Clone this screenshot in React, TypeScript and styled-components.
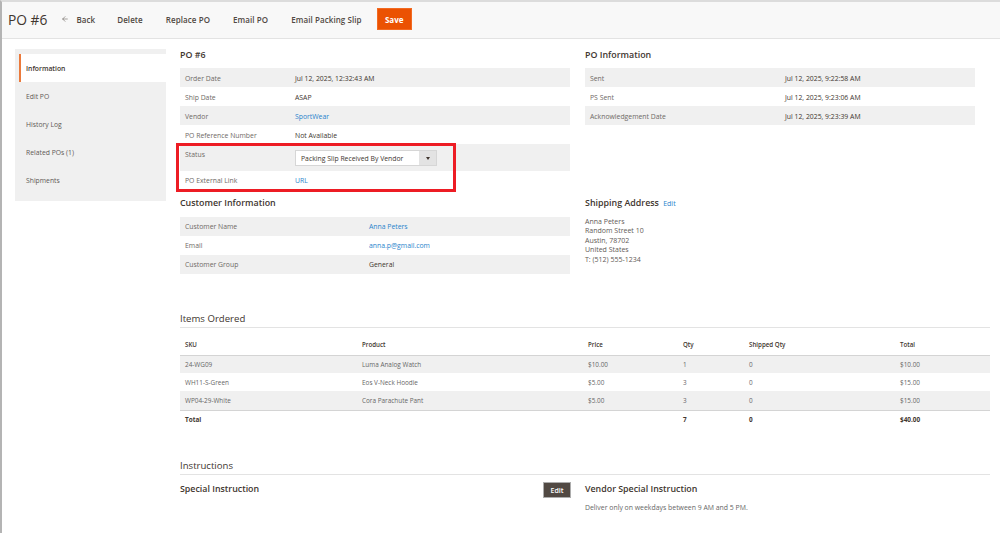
import styled, { createGlobalStyle } from 'styled-components';
import { ArrowLeft } from 'lucide-react';

const GlobalStyle = createGlobalStyle`
  html, body {
    margin: 0;
    padding: 0;
    background: #fff;
  }

  * {
    box-sizing: border-box;
  }
`

type InfoRowData = {
  label: string;
  value: string;
  link?: boolean;
}

const orderRows: InfoRowData[] = [
  { label: 'Order Date', value: 'Jul 12, 2025, 12:32:43 AM' },
  { label: 'Ship Date', value: 'ASAP' },
  { label: 'Vendor', value: 'SportWear', link: true },
  { label: 'PO Reference Number', value: 'Not Available' },
];

const infoRows: InfoRowData[] = [
  { label: 'Sent', value: 'Jul 12, 2025, 9:22:58 AM' },
  { label: 'PS Sent', value: 'Jul 12, 2025, 9:23:06 AM' },
  { label: 'Acknowledgement Date', value: 'Jul 12, 2025, 9:23:39 AM' },
];

const customerRows: InfoRowData[] = [
  { label: 'Customer Name', value: 'Anna Peters', link: true },
  { label: 'Email', value: 'anna.p@gmail.com', link: true },
  { label: 'Customer Group', value: 'General' },
];

const items = [
  ['24-WG09', 'Luma Analog Watch', '$10.00', '1', '0', '$10.00'],
  ['WH11-S-Green', 'Eos V-Neck Hoodie', '$5.00', '3', '0', '$15.00'],
  ['WP04-29-White', 'Cora Parachute Pant', '$5.00', '3', '0', '$15.00'],
];

const navItems = ['Information', 'Edit PO', 'History Log', 'Related POs (1)', 'Shipments'];
const columns = [177, 226, 95, 66, 151, 95];
const headers = ['SKU', 'Product', 'Price', 'Qty', 'Shipped Qty', 'Total'];

type InfoRowsProps = {
  rows: InfoRowData[];
  labelWidth: number;
  offset?: number;
}

const InfoRows = ({ rows, labelWidth, offset = 1 }: InfoRowsProps) => (
  <>
    {rows.map((row, i) => (
      <InfoRow key={row.label} $labelWidth={labelWidth} $shaded={i % 2 === 0} $offset={offset}>
        <Label>{row.label}</Label>
        {row.link ? <LinkValue>{row.value}</LinkValue> : <Value>{row.value}</Value>}
      </InfoRow>
    ))}
  </>
);

export default function App() {
  return (
    <Page>
      <GlobalStyle />
      <Toolbar>
        <PageTitle>PO #6</PageTitle>
        <BackAction>
          <ArrowLeft size={8} strokeWidth={1.5} />
          Back
        </BackAction>
        <Action $left={22}>Delete</Action>
        <Action $left={23}>Replace PO</Action>
        <Action $left={23}>Email PO</Action>
        <Action $left={23}>Email Packing Slip</Action>
        <SaveButton>Save</SaveButton>
      </Toolbar>

      <Main>
        <Sidebar>
          {navItems.map((item, i) => (
            <NavItem key={item} $active={i === 0}>{item}</NavItem>
          ))}
        </Sidebar>

        <Content>
          <TopGrid>
            <div>
              <SectionTitle>PO #6</SectionTitle>
              <InfoRows rows={orderRows} labelWidth={115} />
              <StatusBlock>
                <StatusRow>
                  <Label>Status</Label>
                  <Select>
                    <SelectText>Packing Slip Received By Vendor</SelectText>
                    <SelectArrow />
                  </Select>
                </StatusRow>
                <InfoRow $labelWidth={115}>
                  <Label>PO External Link</Label>
                  <LinkValue>URL</LinkValue>
                </InfoRow>
                <Highlight />
              </StatusBlock>
            </div>
            <div>
              <SectionTitle>PO Information</SectionTitle>
              <InfoRows rows={infoRows} labelWidth={200} />
            </div>
            <div>
              <SectionTitle $height={20}>Customer Information</SectionTitle>
              <InfoRows rows={customerRows} labelWidth={189} offset={0} />
            </div>
            <div>
              <SectionTitle>
                Shipping Address <TitleLink>Edit</TitleLink>
              </SectionTitle>
              <Address>
                Anna Peters<br />
                Random Street 10<br />
                Austin, 78702<br />
                United States<br />
                T: (512) 555-1234
              </Address>
            </div>
          </TopGrid>

          <ItemsHeading>Items Ordered</ItemsHeading>
          <ItemsTable>
            <colgroup>
              {columns.map((width, i) => <col key={i} width={width} />)}
            </colgroup>
            <thead>
              <tr>
                {headers.map((header) => <HeadCell key={header}>{header}</HeadCell>)}
              </tr>
            </thead>
            <tbody>
              {items.map((item) => (
                <ItemRow key={item[0]}>
                  {item.map((cell, i) => <Cell key={i}>{cell}</Cell>)}
                </ItemRow>
              ))}
            </tbody>
            <tfoot>
              <tr>
                <TotalCell>Total</TotalCell>
                <TotalCell />
                <TotalCell />
                <TotalCell>7</TotalCell>
                <TotalCell>0</TotalCell>
                <TotalCell>$40.00</TotalCell>
              </tr>
            </tfoot>
          </ItemsTable>

          <InstructionsHeading>Instructions</InstructionsHeading>
          <InstructionsGrid>
            <InstructionHead>
              <InstructionTitle>Special Instruction</InstructionTitle>
              <EditButton>Edit</EditButton>
            </InstructionHead>
            <div>
              <InstructionTitle>Vendor Special Instruction</InstructionTitle>
              <InstructionText>Deliver only on weekdays between 9 AM and 5 PM.</InstructionText>
            </div>
          </InstructionsGrid>
        </Content>
      </Main>
    </Page>
  )
}

const Page = styled.div`
  width: 1000px;
  height: 533px;
  overflow: hidden;
  border-left: 2px solid #b4b4b4;
  border-top: 2px solid #dcdcdc;
  font-family: "Open Sans", "Noto Sans", sans-serif;
  color: #41362f;
`

const Toolbar = styled.header`
  height: 37px;
  padding: 0 0 2px 6px;
  display: flex;
  align-items: center;
  background: #f8f8f8;
  border-bottom: 1px solid #e3e3e3;
`

const PageTitle = styled.h1`
  margin: 0 14px 0 0;
  font-size: 13.8px;
  font-weight: 400;
  color: #41362f;
`

const Action = styled.span<{ $left?: number }>`
  margin-left: ${(p) => p.$left ?? 0}px;
  font-size: 8px;
  font-weight: 600;
  letter-spacing: .08px;
  color: #514943;
`

const BackAction = styled(Action)`
  display: flex;
  align-items: center;
  gap: 7px;
`

const SaveButton = styled.button`
  width: 35px;
  height: 22px;
  margin-left: 15px;
  padding: 0;
  background: #eb5202;
  border: 1px solid #f26a22;
  color: #fff;
  font-family: inherit;
  font-size: 8px;
  font-weight: 700;
`

const Main = styled.main`
  display: flex;
  align-items: flex-start;
  padding: 10px 0 0 13px;
`

const Sidebar = styled.nav`
  width: 151px;
  flex-shrink: 0;
  padding: 5px 0 7px 4px;
  background: #f0f0f0;
`

const NavItem = styled.div<{ $active?: boolean }>`
  height: 28px;
  display: flex;
  align-items: center;
  padding-left: ${(p) => (p.$active ? 5 : 7)}px;
  background: ${(p) => (p.$active ? '#fff' : 'transparent')};
  border-left: ${(p) => (p.$active ? '2px solid #eb7a3c' : 'none')};
  font-size: 6.8px;
  font-weight: ${(p) => (p.$active ? 600 : 400)};
  color: ${(p) => (p.$active ? '#41362f' : '#5f5a56')};
`

const Content = styled.div`
  width: 810px;
  margin-left: 14px;
`

const TopGrid = styled.div`
  width: 795px;
  display: grid;
  grid-template-columns: 390px 390px;
  column-gap: 15px;
  row-gap: 7px;
`

const SectionTitle = styled.h2<{ $height?: number }>`
  height: ${(p) => p.$height ?? 19}px;
  margin: 0;
  font-size: 8.9px;
  font-weight: 600;
  line-height: 12px;
  color: #41362f;
`

const TitleLink = styled.a`
  margin-left: 2px;
  font-size: 7px;
  font-weight: 400;
  color: #2a84cc;
`

const InfoRow = styled.div<{ $labelWidth: number; $shaded?: boolean; $offset?: number }>`
  height: 19px;
  display: grid;
  grid-template-columns: ${(p) => p.$labelWidth - 5}px 1fr;
  align-items: center;
  padding: ${(p) => p.$offset ?? 0}px 0 0 5px;
  background: ${(p) => (p.$shaded ? '#f0f0f0' : 'transparent')};
`

const Label = styled.span`
  font-size: 6.85px;
  color: #6f6a66;
`

const Value = styled.span`
  font-size: 6.85px;
  color: #41362f;
`

const LinkValue = styled(Value)`
  color: #2a84cc;
`

const StatusBlock = styled.div`
  position: relative;
`

const StatusRow = styled.div`
  height: 27px;
  display: grid;
  grid-template-columns: 110px 1fr;
  align-items: start;
  padding: 6px 0 0 5px;
  background: #f0f0f0;
`

const Select = styled.div`
  width: 142px;
  height: 16px;
  display: flex;
  align-items: stretch;
  background: #fff;
  border: 1px solid #d6d6d6;
`

const SelectText = styled.span`
  flex: 1;
  padding-left: 5px;
  font-size: 6.85px;
  line-height: 15px;
  color: #41362f;
`

const SelectArrow = styled.span`
  width: 17px;
  display: flex;
  align-items: center;
  justify-content: center;
  background: #e3e3e3;

  &::after {
    content: '';
    border-left: 2px solid transparent;
    border-right: 2px solid transparent;
    border-top: 3px solid #41362f;
  }
`

const Highlight = styled.div`
  position: absolute;
  top: -1px;
  left: -4px;
  width: 280px;
  height: 49px;
  border: 3px solid #ed1c24;
  pointer-events: none;
`

const Address = styled.div`
  padding-top: 1px;
  font-size: 7px;
  line-height: 9.4px;
  color: #5f5a56;
`

const ItemsHeading = styled.h2`
  margin: 38px 0 0;
  padding-bottom: 2px;
  height: 16px;
  border-bottom: 1px solid #e3e3e3;
  font-size: 9.6px;
  font-weight: 400;
  line-height: 13px;
  color: #41362f;
`

const ItemsTable = styled.table`
  width: 810px;
  table-layout: fixed;
  border-collapse: collapse;
`

const HeadCell = styled.th`
  height: 27px;
  padding: 6px 0 0 5px;
  text-align: left;
  font-size: 6.2px;
  font-weight: 600;
  color: #41362f;
  border-bottom: 1px solid #d4d4d4;
`

const ItemRow = styled.tr`
  &:nth-child(odd) {
    background: #f0f0f0;
  }

  &:last-child td {
    height: 19px;
    padding-top: 1px;
    border-bottom: 1px solid #d4d4d4;
  }
`

const Cell = styled.td`
  height: 18px;
  padding: 0 0 0 5px;
  font-size: 6.4px;
  color: #666;
`

const TotalCell = styled.td`
  height: 19px;
  padding: 0 0 0 5px;
  font-size: 6.4px;
  font-weight: 700;
  color: #41362f;
`

const InstructionsHeading = styled(ItemsHeading)`
  margin-top: 30px;
  line-height: 14px;
`

const InstructionsGrid = styled.div`
  display: grid;
  grid-template-columns: 391px 390px;
  column-gap: 14px;
  padding-top: 7px;
`

const InstructionHead = styled.div`
  display: flex;
  justify-content: space-between;
  align-items: flex-start;
`

const InstructionTitle = styled.h3`
  margin: 0;
  font-size: 8.85px;
  font-weight: 600;
  line-height: 14px;
  color: #41362f;
`

const EditButton = styled.button`
  width: 28px;
  height: 16px;
  padding: 0;
  background: #514943;
  border: 1px solid #adadad;
  color: #fff;
  font-family: inherit;
  font-size: 7px;
  font-weight: 600;
`

const InstructionText = styled.p`
  margin: 7px 0 0;
  font-size: 6.9px;
  color: #666;
`
